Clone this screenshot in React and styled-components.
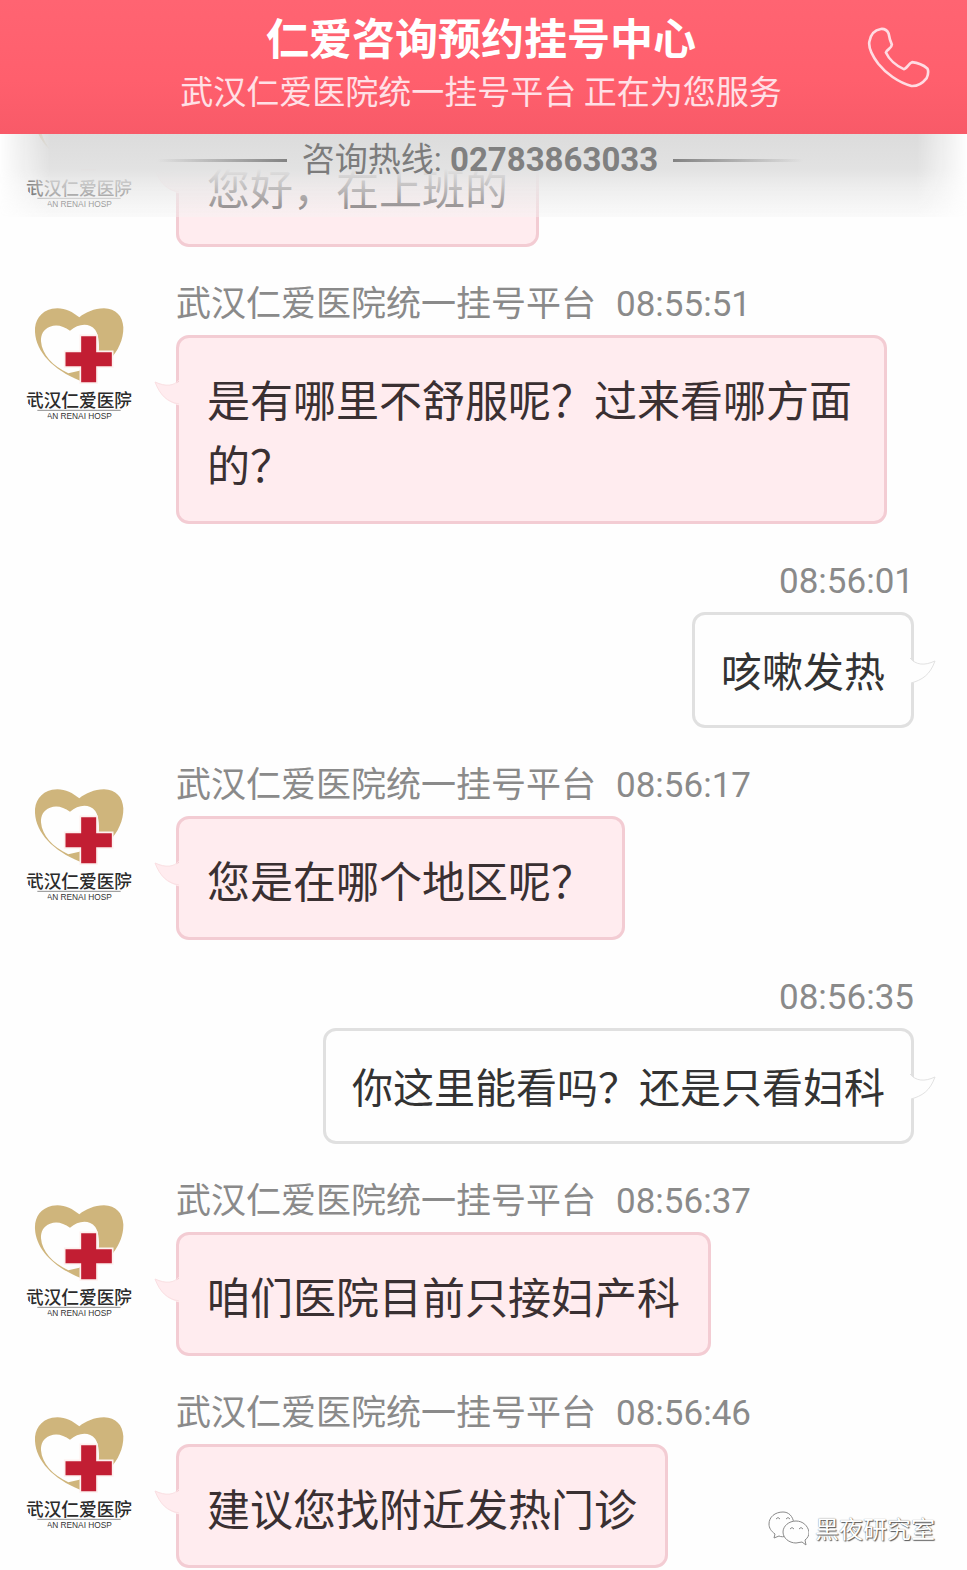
import { useId } from 'react';
import styled, { createGlobalStyle } from 'styled-components';

const GlobalStyle = createGlobalStyle`
  * {
    box-sizing: border-box;
  }

  body {
    margin: 0;
    background: #fefefe;
    font-family: Roboto, 'Noto Sans CJK SC', sans-serif;
  }
`;

const Page = styled.div`
  position: relative;
  overflow: hidden;
`;

const TopArea = styled.div`
  position: absolute;
  top: 0;
  left: 0;
  right: 0;
  z-index: 2;
`;

const Header = styled.header`
  display: grid;
  grid-template-columns: 100px 1fr 100px;
  align-items: start;
  padding: 9px 0 17px;
  background: linear-gradient(#ff6472, #ff5f6d 60%, #f85a68);
`;

const Titles = styled.div`
  grid-column: 2;
  text-align: center;
  font-family: 'Noto Sans CJK SC', sans-serif;
  padding-right: 5px;
`;

const Title = styled.h1`
  margin: 0;
  font-size: 43px;
  line-height: 54px;
  font-weight: 700;
  color: #fff;
`;

const Subtitle = styled.p`
  margin: 0;
  font-size: 33px;
  line-height: 54px;
  color: #ffe0e6;
`;

const CallButton = styled.button`
  display: block;
  margin: 18px 0 0;
  padding: 0;
  border: 0;
  background: none;
  cursor: pointer;

  svg {
    display: block;
    width: 63px;
    height: 61px;
  }
`;

const Hotline = styled.div`
  position: relative;
  display: flex;
  align-items: center;
  justify-content: center;
  gap: 15px;
  height: 83px;
  padding: 0 7px 31px 0;

  &::before {
    content: '';
    position: absolute;
    inset: 0;
    background: linear-gradient(
      #dcdcdc,
      #e2e2e2 42%,
      rgba(232, 232, 232, 0.8) 62%,
      rgba(245, 245, 245, 0.4)
    );
    mask-image: linear-gradient(to right, transparent, #000 50px, #000 calc(100% - 50px), transparent);
  }
`;

const HotlineText = styled.span`
  position: relative;
  font-size: 33px;
  line-height: 52px;
  color: #7c7c7c;

  strong {
    font-weight: 700;
    color: #808080;
  }
`;

const Rule = styled.span`
  position: relative;
  width: 130px;
  height: 3px;
  background: linear-gradient(to ${(p) => p.$fade}, #828282, transparent);
`;

const Chat = styled.main`
  display: flex;
  flex-direction: column;
  gap: 36px;
  padding: 71px 53px 4px 24px;
`;

const AgentRow = styled.article`
  display: flex;
  align-items: flex-start;
  gap: 42px;
  padding-right: 27px;
`;

const Logo = styled.svg`
  flex: none;
  width: 110px;
  height: 118px;
  margin-top: 19px;
`;

const Body = styled.div`
  display: flex;
  flex-direction: column;
  align-items: flex-start;
  gap: 8px;
  min-width: 0;
`;

const UserRow = styled(Body).attrs({ as: 'article' })`
  align-items: flex-end;
`;

const Meta = styled.div`
  display: flex;
  gap: 20px;
  min-height: 44px;
  font-size: 35px;
  line-height: 44px;
  color: #8a8a8a;
`;

const Bubble = styled.p`
  position: relative;
  margin: 0;
  border-radius: 13px;
  font-family: 'Noto Sans CJK SC', sans-serif;
`;

const AgentBubble = styled(Bubble)`
  padding: 28px 28px 25px;
  border: 3px solid #f3ccd3;
  background: #ffecef;
  font-size: 43px;
  line-height: 65px;
  color: #3a3032;
`;

const UserBubble = styled(Bubble)`
  padding: 23px 26px 25px;
  border: 3px solid #e0e0e0;
  background: #fefefe;
  font-size: 41px;
  line-height: 62px;
  color: #333;
`;

const Tail = styled.svg`
  position: absolute;
  top: 38px;
  width: 28px;
  height: 32px;
  ${(p) => (p.$side === 'left' ? 'right: 100%;' : 'left: 100%;')}
  margin: 0 -3px;
`;

const Watermark = styled.div`
  position: absolute;
  right: 32px;
  bottom: 26px;
  z-index: 3;
  display: flex;
  align-items: center;
  gap: 6px;
  font-family: 'Noto Sans CJK SC', sans-serif;
  font-size: 24px;
  line-height: 36px;
  color: #fff;
  text-shadow: 1px 1px 1px #555, 0 0 1px #777;

  svg {
    width: 41px;
    height: 36px;
  }
`;

const messages = [
  { id: 1, from: 'agent', text: '您好，在上班的' },
  { id: 2, from: 'agent', time: '08:55:51', text: '是有哪里不舒服呢？过来看哪方面的？' },
  { id: 3, from: 'user', time: '08:56:01', text: '咳嗽发热' },
  { id: 4, from: 'agent', time: '08:56:17', text: '您是在哪个地区呢？' },
  { id: 5, from: 'user', time: '08:56:35', text: '你这里能看吗？还是只看妇科' },
  { id: 6, from: 'agent', time: '08:56:37', text: '咱们医院目前只接妇产科' },
  { id: 7, from: 'agent', time: '08:56:46', text: '建议您找附近发热门诊' },
];

const HospitalLogo = () => {
  const clipId = useId();

  return (
    <Logo viewBox="0 0 330 354" role="img" aria-label="武汉仁爱医院">
      <clipPath id={clipId}>
        <circle cx="165" cy="153" r="215" />
      </clipPath>
      <path
        fill="#cfb57c"
        d="M166 46C142 26 116 14 84 20C50 28 31 54 33 90C36 150 88 204 168 236C230 212 300 150 298 76C296 42 276 20 240 19C210 20 186 30 166 46Z"
      />
      <path
        fill="#fefefe"
        d="M138 86C118 72 98 66 78 74C58 82 50 98 51 118C54 158 86 192 133 214L166 206L224 160C226 130 226 104 214 84C194 60 162 66 138 86Z"
      />
      <path fill="#fefefe" d="M218 194H272V158L320 158V250H218Z" />
      <path
        fill="#c21e33"
        stroke="#fdf0ee"
        strokeWidth="5"
        d="M169 100H219V148H266V195H219V243H169V195H122V148H169Z"
      />
      <g clipPath={`url(#${clipId})`}>
        <text x="6" y="315" fontFamily="'Noto Sans CJK SC', sans-serif" fontSize="53" fontWeight="500" fill="#2b2b2b">
          武汉仁爱医院
        </text>
        <path d="M40 325H290" stroke="#555" strokeWidth="2" />
        <text x="68" y="350" fontFamily="'Liberation Sans', sans-serif" fontSize="25" fill="#333">
          AN RENAI HOSP
        </text>
      </g>
    </Logo>
  );
};

const AgentMessage = ({ message }) => (
  <AgentRow>
    <HospitalLogo />
    <Body>
      <Meta>
        {message.time && (
          <>
            <span>武汉仁爱医院统一挂号平台</span>
            <time>{message.time}</time>
          </>
        )}
      </Meta>
      <AgentBubble>
        {message.text}
        <Tail $side="left" viewBox="0 0 28 32" aria-hidden="true">
          <path d="M28 3C22 10 12 11 1 6C6 19 13 27 28 30Z" fill="#ffecef" />
          <path d="M25 4C20 10 12 11 1 6C6 19 13 26 25 28" fill="none" stroke="#fadfe2" strokeWidth="1" />
        </Tail>
      </AgentBubble>
    </Body>
  </AgentRow>
);

const UserMessage = ({ message }) => (
  <UserRow>
    <Meta>
      <time>{message.time}</time>
    </Meta>
    <UserBubble>
      {message.text}
      <Tail $side="right" viewBox="0 0 28 32" aria-hidden="true">
        <path d="M0 3C6 12 16 13 27 8C22 22 14 28 0 31Z" fill="#fefefe" />
        <path d="M2 5C8 12 16 13 27 8C22 22 14 27 3 30" fill="none" stroke="#e2e2e2" strokeWidth="1" />
      </Tail>
    </UserBubble>
  </UserRow>
);

const App = () => {
  return (
    <>
      <GlobalStyle />
      <Page>
        <TopArea>
          <Header>
            <Titles>
              <Title>仁爱咨询预约挂号中心</Title>
              <Subtitle>武汉仁爱医院统一挂号平台 正在为您服务</Subtitle>
            </Titles>
            <CallButton type="button" aria-label="拨打电话">
              <svg viewBox="0 0 190 182" fill="none" stroke="#ffdce3" strokeWidth="8" strokeLinejoin="round">
                <path d="M42 5C52 4 60 8 65 18C67 30 70 42 75 52C75 64 60 66 57 76C66 96 88 116 111 126C120 126 124 110 136 105C154 107 170 114 182 124C186 132 184 144 180 153C168 168 152 178 134 177C94 166 56 138 34 110C16 86 4 64 7 44C10 24 22 8 42 5Z" />
              </svg>
            </CallButton>
          </Header>
          <Hotline>
            <Rule $fade="left" />
            <HotlineText>
              咨询热线: <strong>02783863033</strong>
            </HotlineText>
            <Rule $fade="right" />
          </Hotline>
        </TopArea>
        <Chat>
          {messages.map((message) =>
            message.from === 'agent' ? (
              <AgentMessage key={message.id} message={message} />
            ) : (
              <UserMessage key={message.id} message={message} />
            )
          )}
        </Chat>
        <Watermark>
          <svg viewBox="0 0 41 36" fill="#fefefe" stroke="#8a8a8a" strokeWidth="1" aria-hidden="true">
            <path d="M15 2C7 2 1 7 1 14C1 18 3 21 7 24L6 28L11 26C13 27 16 27 18 26C29 26 29 2 15 2Z" />
            <path d="M28 11C21 11 15 16 15 22C15 28 21 33 28 33L34 32L38 35L37 30C40 28 41 25 41 22C40 16 35 11 28 11Z" />
            <path d="M8 9Q10 6 12 9M18 9Q20 6 22 9M22 19Q24 16 26 19M31 19Q33 16 35 19" fill="none" />
          </svg>
          <span>黑夜研究室</span>
        </Watermark>
      </Page>
    </>
  );
};

export default App;
